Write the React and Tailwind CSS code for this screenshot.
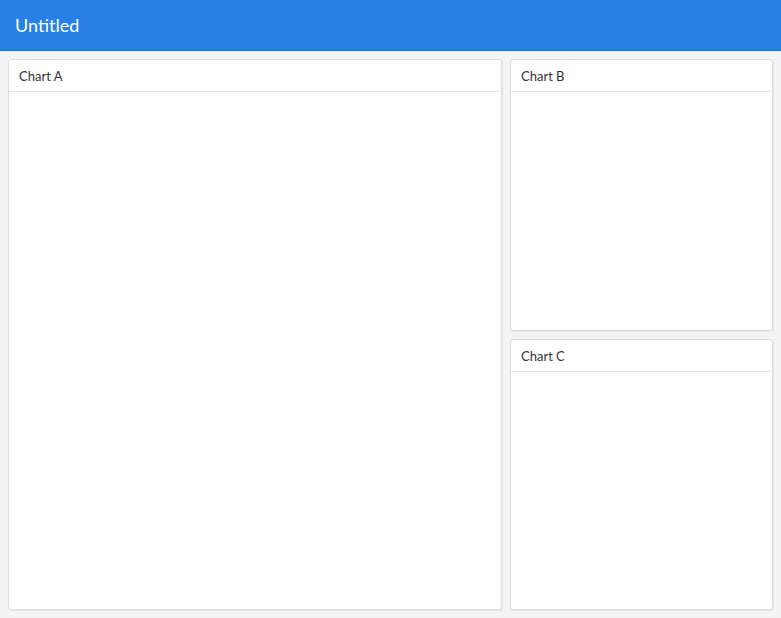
import React from "react";

const Card = ({ title, className = "" }) => (
  <div className={`flex flex-col bg-white border border-[#dddddd] rounded-[3px] shadow-[1px_1px_1px_rgba(0,0,0,0.06)] ${className}`}>
    <div className="h-8 flex items-center pt-[3px] px-[10px] border-b border-[#e2e2e2] text-[13px] text-[#333333]">
      {title}
    </div>
    <div className="flex-1" />
  </div>
);

export default function App() {
  return (
    <div className="h-screen flex flex-col bg-[#f4f4f4] font-['Lato',sans-serif]">
      <div className="h-[51px] shrink-0 bg-[#2780e3] border-b border-[#1f6fcb] flex items-center px-[15px]">
        <span className="text-white text-[18px]">Untitled</span>
      </div>
      <div className="flex-1 min-h-0 p-2 grid grid-cols-[494fr_263fr] gap-2">
        <Card title="Chart A" />
        <div className="grid grid-rows-2 gap-2 min-h-0">
          <Card title="Chart B" />
          <Card title="Chart C" />
        </div>
      </div>
    </div>
  );
}
